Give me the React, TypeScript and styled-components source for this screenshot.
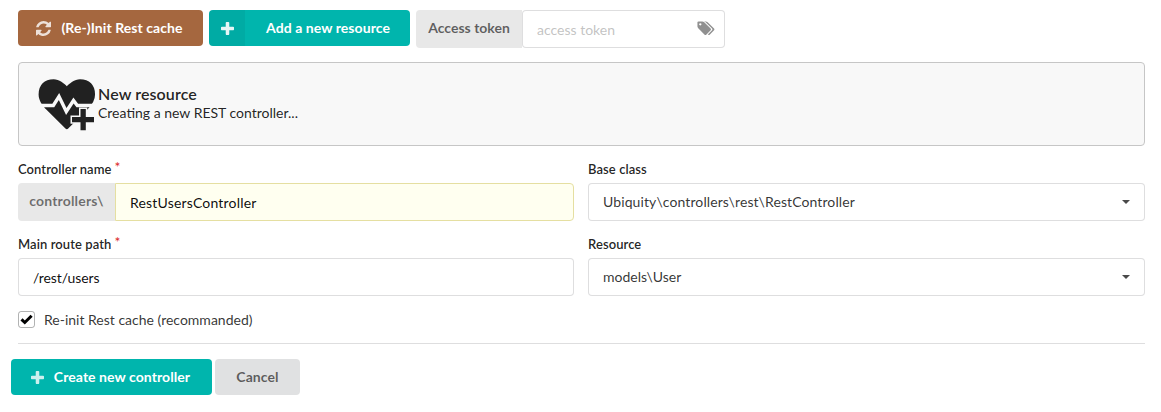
import React from "react";
import styled, { createGlobalStyle } from "styled-components";

const GlobalStyle = createGlobalStyle`
  *, *::before, *::after { box-sizing: border-box; }
  body {
    margin: 0;
    background: #fff;
    color: rgba(0, 0, 0, 0.87);
    font-family: Lato, "Liberation Sans", sans-serif;
    font-size: 14px;
    line-height: 20px;
  }
`;

const Page = styled.main`
  display: flex;
  flex-direction: column;
  padding: 10px 16px 0 18px;
`;

const Toolbar = styled.div`
  display: flex;
  align-items: flex-start;
  height: 38px;
`;

const tones = {
  brown: { bg: "#a5673f", fg: "#fff" },
  teal: { bg: "#00b5ad", fg: "#fff" },
  grey: { bg: "#e0e1e2", fg: "rgba(0, 0, 0, 0.6)" },
};

const Button = styled.button<{ $tone: keyof typeof tones; $width: number; $gap?: number; $inset?: number }>`
  display: flex;
  align-items: center;
  justify-content: center;
  gap: 10px;
  width: ${(p) => p.$width}px;
  height: 36px;
  margin: 0 ${(p) => p.$gap ?? 0}px 0 0;
  padding: 0 ${(p) => p.$inset ?? 0}px 0 0;
  border: 0;
  border-radius: 4px;
  overflow: hidden;
  background: ${(p) => tones[p.$tone].bg};
  color: ${(p) => tones[p.$tone].fg};
  font: 700 14px/14px Lato, "Liberation Sans", sans-serif;
  letter-spacing: 0.07px;
  white-space: nowrap;
`;

const IconStrip = styled.span`
  display: flex;
  flex: 0 0 36px;
  align-items: center;
  justify-content: center;
  align-self: stretch;
  background: rgba(0, 0, 0, 0.05);
`;

const StripText = styled.span`
  flex: 1;
  margin-left: -9px;
  text-align: center;
`;

const Glyph = styled.svg<{ $opacity?: number }>`
  display: block;
  flex: none;
  fill: currentColor;
  opacity: ${(p) => p.$opacity ?? 1};
`;

const Labeled = styled.div<{ $width?: number }>`
  display: flex;
  width: ${(p) => (p.$width ? `${p.$width}px` : "100%")};
  height: 38px;
`;

const Addon = styled.div<{ $width: number; $muted?: boolean }>`
  flex: 0 0 ${(p) => p.$width}px;
  padding-top: 8px;
  border-radius: 4px 0 0 4px;
  background: #e8e8e8;
  color: ${(p) => (p.$muted ? "rgba(0, 0, 0, 0.54)" : "rgba(0, 0, 0, 0.6)")};
  font-weight: 700;
  letter-spacing: ${(p) => (p.$muted ? "0.17px" : "0")};
  text-align: center;
`;

const Box = styled.div<{ $filled?: boolean; $radius?: string; $top?: number }>`
  display: flex;
  flex: 1;
  align-items: flex-start;
  justify-content: space-between;
  height: 38px;
  padding: ${(p) => p.$top ?? 9}px 14px 0;
  border: 1px solid ${(p) => (p.$filled ? "#e5dfa1" : "rgba(34, 36, 38, 0.15)")};
  border-radius: ${(p) => p.$radius ?? "4px"};
  background: ${(p) => (p.$filled ? "#fffff0" : "#fff")};
`;

const Placeholder = styled.span`
  color: rgba(191, 191, 191, 0.95);
`;

const TagIcon = styled(Glyph)`
  margin: 1px -5px 0 0;
`;

const Message = styled.section`
  display: flex;
  height: 84px;
  margin-top: 14px;
  padding: 15px 19px;
  border: 1px solid #c6c6c6;
  border-radius: 4px;
  background: #f8f8f8;
`;

const MessageText = styled.div`
  margin: 7px 0 0 2px;
`;

const Title = styled.div`
  font-size: 16px;
  font-weight: 600;
  line-height: 18px;
  letter-spacing: 0.1px;
`;

const Fields = styled.div`
  display: grid;
  grid-template-columns: 556px 557px;
  column-gap: 14px;
  row-gap: 14px;
  margin-top: 14px;
`;

const Label = styled.div`
  height: 23px;
  font-size: 13px;
  font-weight: 600;
  line-height: 18px;
  letter-spacing: 0.08px;
`;

const Required = styled.span`
  position: relative;
  top: -2px;
  margin-left: 3px;
  color: #db2828;
  font-size: 14px;
  font-weight: 400;
  line-height: 14px;
`;

const Value = styled.span<{ $soft?: boolean; $tracking?: number }>`
  color: ${(p) => (p.$soft ? "rgba(0, 0, 0, 0.8)" : "rgba(0, 0, 0, 0.95)")};
  letter-spacing: ${(p) => p.$tracking ?? 0}px;
`;

const Caret = styled(Glyph)`
  margin-top: 8px;
`;

const CheckRow = styled.div`
  display: flex;
  align-items: center;
  gap: 9px;
  height: 17px;
  margin-top: 15px;
`;

const CheckBox = styled.span`
  display: flex;
  align-items: center;
  justify-content: center;
  width: 17px;
  height: 17px;
  border: 1px solid rgba(34, 36, 38, 0.35);
  border-radius: 3px;
`;

const Divider = styled.div`
  height: 1px;
  margin-top: 15px;
  background: rgba(34, 36, 38, 0.15);
`;

const Actions = styled.div`
  display: flex;
  margin: 15px 0 0 -7px;
`;

const PlusShift = styled.span`
  margin-left: -2px;
`;

const Refresh = () => (
  <Glyph $opacity={0.8} width="15" height="15" viewBox="0 0 1536 1536">
    <path d="M1511 928q0 5-1 7-64 268-268 434.500t-478 166.500q-146 0-282.500-55t-243.500-157l-129 129q-19 19-45 19t-45-19-19-45v-448q0-26 19-45t45-19h448q26 0 45 19t19 45-19 45l-137 137q71 66 161 102t187 36q134 0 250-65t186-179q11-17 53-117 8-23 30-23h192q13 0 22.500 9.500t9.500 22.500zm25-800v448q0 26-19 45t-45 19h-448q-26 0-45-19t-19-45 19-45l138-138q-148-137-349-137-134 0-250 65t-186 179q-11 17-53 117-8 23-30 23h-199q-13 0-22.500-9.500t-9.500-22.500v-7q65-268 270-434.500t480-166.500q146 0 284 55.500t245 156.500l130-129q19-19 45-19t45 19 19 45z" />
  </Glyph>
);

const PLUS =
  "M1408 608v192q0 40-28 68t-68 28H896v416q0 40-28 68t-68 28H608q-40 0-68-28t-28-68V896H96q-40 0-68-28T0 800V608q0-40 28-68t68-28h416V96q0-40 28-68t68-28h192q40 0 68 28t28 68v416h416q40 0 68 28t28 68z";

const Plus = ({ opacity }: { opacity: number }) => (
  <Glyph $opacity={opacity} width="13" height="13" viewBox="0 0 1408 1408">
    <path d={PLUS} />
  </Glyph>
);

const Tags = () => (
  <TagIcon $opacity={0.43} width="18" height="16" viewBox="0 0 1920 1792" color="#000">
    <path
      transform="translate(0 -80)"
      d="M448 448q0-53-37.500-90.500t-90.500-37.500-90.500 37.500-37.500 90.500 37.500 90.500 90.500 37.500 90.500-37.500 37.500-90.500zm1067 576q0 53-37 90l-491 492q-39 37-91 37-53 0-90-37l-715-716q-38-37-64.500-101t-26.500-117v-416q0-52 38-90t90-38h416q53 0 117 26.500t102 64.500l715 714q37 39 37 91zm384 0q0 53-37 90l-491 492q-39 37-91 37-36 0-59-14t-53-45l470-470q37-37 37-90 0-52-37-91l-715-714q-38-38-102-64.500t-117-26.500h224q53 0 117 26.500t102 64.500l715 714q37 39 37 91z"
    />
  </TagIcon>
);

const HeartPlus = () => (
  <Glyph width="58" height="54" viewBox="0 0 58 54" color="#212121">
    <path
      transform="translate(.6 -2.900) scale(.0315 .0325)"
      d="M896 1664q-26 0-44-18L228 1044q-10-8-27.500-26T145 952.500 77 855 23.500 734 0 596q0-220 127-344t351-124q62 0 126.500 21.500t120 58T820 276t76 68q36-36 76-68t95.500-68.500 120-58T1314 128q224 0 351 124t127 344q0 221-229 450l-623 600q-18 18-44 18z"
    />
    <path
      d="M-1 27.500H15.300L21 18.500 28.300 33.500 35.500 22.500 39.300 27.500H58"
      fill="none"
      stroke="#f8f8f8"
      strokeWidth="3.400"
      strokeLinejoin="miter"
    />
    <path
      d="M42.500 31h5.300v8H56v5.200h-8.200V52.300h-5.300v-8.100H34V39h8.500z"
      stroke="#f8f8f8"
      strokeWidth="3"
      paintOrder="stroke"
    />
  </Glyph>
);

const Down = () => (
  <Caret width="8" height="4" viewBox="0 0 8 4" color="#4a4a4a">
    <path d="M0 0h8L4 4z" />
  </Caret>
);

export default function App() {
  return (
    <>
      <GlobalStyle />
      <Page>
        <Toolbar>
          <Button $tone="brown" $width={185} $gap={6} $inset={2}>
            <Refresh />
            <span>(Re-)Init Rest cache</span>
          </Button>
          <Button $tone="teal" $width={201} $gap={6}>
            <IconStrip>
              <Plus opacity={0.9} />
            </IconStrip>
            <StripText>Add a new resource</StripText>
          </Button>
          <Labeled $width={309}>
            <Addon $width={106}>Access token</Addon>
            <Box $top={9}>
              <Placeholder>access token</Placeholder>
              <Tags />
            </Box>
          </Labeled>
        </Toolbar>

        <Message>
          <HeartPlus />
          <MessageText>
            <Title>New resource</Title>
            <div>Creating a new REST controller...</div>
          </MessageText>
        </Message>

        <Fields>
          <div>
            <Label>
              Controller name<Required>*</Required>
            </Label>
            <Labeled>
              <Addon $width={97} $muted>
                controllers\
              </Addon>
              <Box $filled $radius="0 4px 4px 0">
                <Value $tracking={0.2}>RestUsersController</Value>
              </Box>
            </Labeled>
          </div>
          <div>
            <Label>Base class</Label>
            <Box $top={8}>
              <Value $soft $tracking={0.1}>
                Ubiquity\controllers\rest\RestController
              </Value>
              <Down />
            </Box>
          </div>
          <div>
            <Label>
              Main route path<Required>*</Required>
            </Label>
            <Box>
              <Value $tracking={-0.1}>/rest/users</Value>
            </Box>
          </div>
          <div>
            <Label>Resource</Label>
            <Box $top={8}>
              <Value $soft>models\User</Value>
              <Down />
            </Box>
          </div>
        </Fields>

        <CheckRow>
          <CheckBox>
            <svg width="13" height="11" viewBox="0 0 13 11" fill="none" stroke="#000" strokeWidth="3">
              <path d="M1.500 5.300l3.300 3.200 6.800-6.800" />
            </svg>
          </CheckBox>
          <Value $soft>Re-init Rest cache (recommanded)</Value>
        </CheckRow>

        <Divider />

        <Actions>
          <Button $tone="teal" $width={201} $gap={3}>
            <PlusShift>
              <Plus opacity={0.8} />
            </PlusShift>
            <span>Create new controller</span>
          </Button>
          <Button $tone="grey" $width={85}>
            Cancel
          </Button>
        </Actions>
      </Page>
    </>
  );
}
